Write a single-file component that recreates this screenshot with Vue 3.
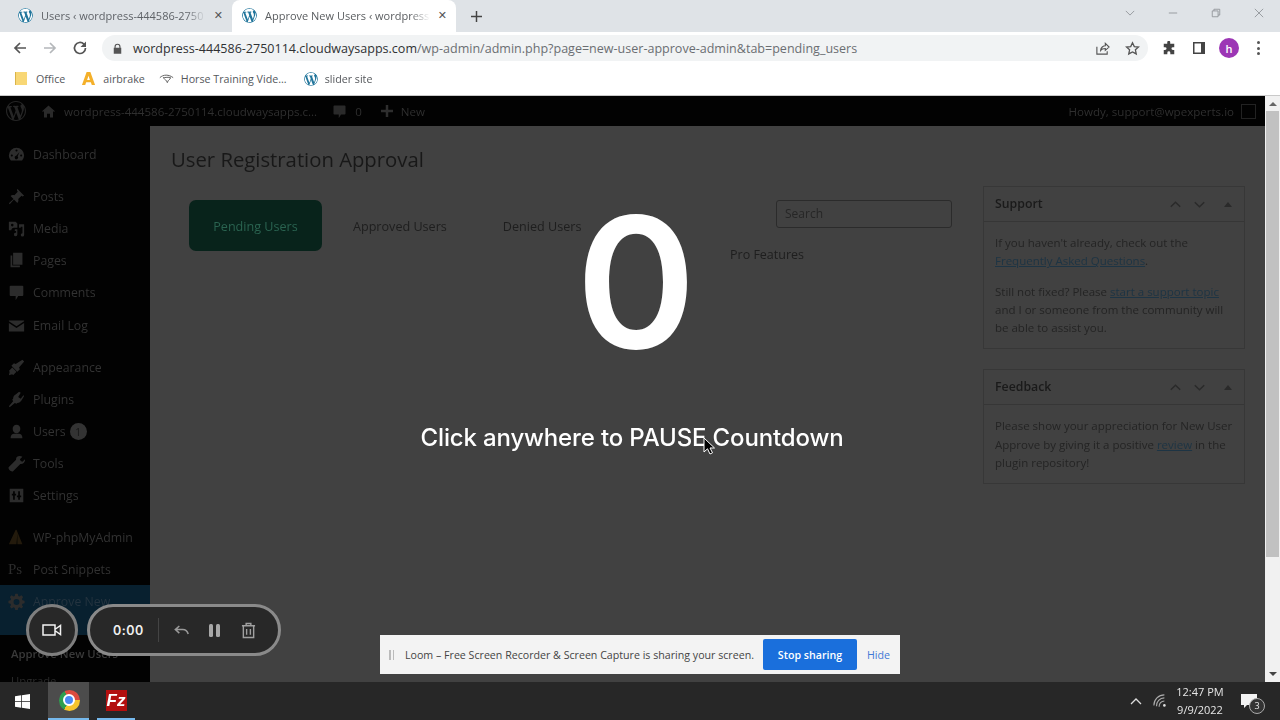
<script setup>
const wpPath = "M20 10c0-5.51-4.49-10-10-10C4.48 0 0 4.49 0 10c0 5.52 4.48 10 10 10 5.51 0 10-4.48 10-10zM7.78 15.37L4.37 6.22c.55-.02 1.17-.08 1.17-.08.5-.06.44-1.13-.06-1.11 0 0-1.45.11-2.37.11-.18 0-.37 0-.58-.01C4.12 2.69 6.87 1.11 10 1.11c2.33 0 4.45.87 6.05 2.34-.68-.11-1.65.39-1.65 1.58 0 .74.45 1.36.9 2.1.35.61.55 1.36.55 2.46 0 1.49-1.4 5-1.4 5l-3.03-8.37c.54-.02.82-.17.82-.17.5-.05.44-1.25-.06-1.22 0 0-1.44.12-2.38.12-.87 0-2.33-.12-2.33-.12-.5-.03-.56 1.2-.06 1.22l.92.08 1.26 3.41zM17.41 10c.24-.64.74-1.87.43-4.25.7 1.29 1.05 2.71 1.05 4.25 0 3.29-1.73 6.24-4.4 7.78.97-2.59 1.94-5.2 2.92-7.78zM6.1 18.09C3.12 16.65 1.11 13.53 1.11 10c0-1.3.23-2.48.72-3.59C3.25 10.3 4.67 14.2 6.1 18.09zm4.03-6.63l2.58 6.98c-.86.29-1.76.45-2.71.45-.79 0-1.57-.11-2.29-.33.81-2.38 1.62-4.74 2.42-7.1z";

const icons = {
  dashboard: "M10 2a9 9 0 0 0-9 9c0 2.4.9 4.5 2.4 6h13.2A9 9 0 0 0 19 11a9 9 0 0 0-9-9zm0 2a1.2 1.2 0 1 1 0 2.4A1.2 1.2 0 0 1 10 4zM4.5 10a1.2 1.2 0 1 1 0 2.4 1.2 1.2 0 0 1 0-2.4zm11 0a1.2 1.2 0 1 1 0 2.4 1.2 1.2 0 0 1 0-2.4zM13.5 7l-2.2 5.2a2 2 0 1 1-1.6-.6z",
  pin: "M11 1l8 8-2 1-1-1-4 4c.6 1.8.2 3.4-1 4.5L7 13.5 2 19l-1-1 5.5-5L3 9.5C4.1 8.3 5.7 7.900 7.500 8.500l4-4-1-1.500z",
  media: "M1 2h8l2 2v5H7a3 3 0 0 0-3 3H1zm4 2.500a1.500 1.500 0 1 0 0 3 1.500 1.500 0 0 0 0-3zM13 5h6v12.500a2 2 0 1 1-2-2V8h-2v1h-2zM8 11h3v6a2 2 0 1 1-1.500-1.900V13H8z",
  pages: "M6 1h11v14H6zM3 4h2v12h9v2H3z",
  comment: "M3 2h14a1 1 0 0 1 1 1v10a1 1 0 0 1-1 1h-5l-3 5v-5H3a1 1 0 0 1-1-1V3a1 1 0 0 1 1-1z",
  mail: "M1 4h18v1l-9 6-9-6zM1 7l9 6 9-6v10H1z",
  brush: "M19 3l-2-2-8 5-2-1-3 3 7 7 3-3-1-2zM5 10l-4 4 1 1-1 4 4-1 1 1 4-4z",
  plugin: "M13 1l2 1-3 5 3 2 3-4 1 1-3 5c-1 2-3 3-5 3l-1 1-2-1-6 5-1-1 5-6-1-2 1-1c0-2 1-4 3-5z",
  user: "M10 2a4.500 4.500 0 0 1 4.500 5c0 2.800-2 5-4.500 5S5.500 9.800 5.500 7A4.500 4.500 0 0 1 10 2zM3 18c0-4 2-5.500 4-5.500h6c2 0 4 1.500 4 5.500z",
  wrench: "M17 2l-3 3 1 2 2 1 3-3c.5 3-2 6-5.500 5.500L6 19c-1 1-3 0-4-1s-2-3-1-4l8.500-8.500C9 2 13 0 17 2z",
  settings: "M2 2h16v16H2zm4 3v3H4.500v2H6v5h2v-5h1.500V8H8V5zm6 0v5h-1.500v2H12v3h2v-3h1.500v-2H14V5z",
  sail: "M9 1h1l7 17h-6V5l-1 13H1z",
  gear: "M8.500 1h3l.5 2.500 1.500.6L15.700 2.700 17.800 4.800l-1.400 2.200.6 1.500 2.500.5v3l-2.500.5-.6 1.500 1.400 2.200-2.100 2.100-2.200-1.400-1.500.6-.5 2.500h-3l-.5-2.500-1.500-.6-2.200 1.400L2.200 16.300l1.400-2.200-.6-1.500L.5 12V9l2.500-.5.6-1.500-1.400-2.200L4.300 2.700l2.200 1.400 1.500-.6zM10 7a3.500 3.500 0 1 0 0 7 3.500 3.500 0 0 0 0-7z"
};

const menu = [
  { label: "Dashboard", icon: "dashboard", gap: true },
  { label: "Posts", icon: "pin" },
  { label: "Media", icon: "media" },
  { label: "Pages", icon: "pages" },
  { label: "Comments", icon: "comment" },
  { label: "Email Log", icon: "mail", gap: true },
  { label: "Appearance", icon: "brush" },
  { label: "Plugins", icon: "plugin" },
  { label: "Users", icon: "user", badge: 1 },
  { label: "Tools", icon: "wrench" },
  { label: "Settings", icon: "settings", gap: true, last: true },
  { label: "WP-phpMyAdmin", icon: "sail", sail: true },
  { label: "Post Snippets", ps: true },
  { label: "Approve New", icon: "gear", current: true }
];

const boxes = [
  { title: "Support", cls: "support" },
  { title: "Feedback", cls: "feedback" }
];
</script>

<template>
  <div class="screen">
    <div class="tabstrip">
      <div class="tab">
        <svg class="favicon" viewBox="0 0 20 20"><path :d="wpPath" /></svg>
        <span class="tab-title">Users ‹ wordpress-444586-2750</span>
        <span class="tab-x">✕</span>
      </div>
      <div class="tab active">
        <svg class="favicon" viewBox="0 0 20 20"><path :d="wpPath" /></svg>
        <span class="tab-title">Approve New Users ‹ wordpress-</span>
        <span class="tab-x">✕</span>
      </div>
      <svg class="newtab" viewBox="0 0 12 12"><path d="M6 0v12M0 6h12" /></svg>
      <div class="winctl">
        <svg viewBox="0 0 12 12" class="w-chev"><path d="M1 3.500l5 5 5-5" /></svg>
        <svg viewBox="0 0 12 12" class="w-min"><path d="M1 6h10" /></svg>
        <svg viewBox="0 0 12 12" class="w-res"><path d="M1.500 3.500h7v7h-7zM3.500 3.500v-2h7v7h-2" /></svg>
        <svg viewBox="0 0 12 12" class="w-close"><path d="M1 1l10 10M11 1L1 11" /></svg>
      </div>
    </div>

    <div class="toolbar">
      <svg class="nav" viewBox="0 0 16 16"><path d="M14 8H3M8 3L3 8l5 5" /></svg>
      <svg class="nav dim" viewBox="0 0 16 16"><path d="M2 8h11M8 3l5 5-5 5" /></svg>
      <svg class="nav" viewBox="0 0 16 16"><path d="M13.500 8a5.500 5.500 0 1 1-1.600-3.900L13.500 5.700" /><path class="fill" d="M14 1.500V7H8.500z" /></svg>
      <div class="omnibox">
        <svg class="lock" viewBox="0 0 12 14"><path d="M2 6V4.500a4 4 0 0 1 8 0V6h1v8H1V6zm1.500 0h5V4.500a2.500 2.500 0 0 0-5 0z" /></svg>
        <span class="url"><b>wordpress-444586-2750114.cloudwaysapps.com</b>/wp-admin/admin.php?page=new-user-approve-admin&amp;tab=pending_users</span>
        <svg class="omni-icon share" viewBox="0 0 16 16"><path d="M2 6v8h11v-3M6 10c0-3 3-5 5-5V2.500L15 6.500 11 10V8c-2 0-4 .5-5 2z" /></svg>
        <svg class="omni-icon star" viewBox="0 0 16 16"><path d="M8 1.800l1.900 4.100 4.500.5-3.300 3 .9 4.400L8 11.600l-4 2.200.9-4.400-3.300-3 4.500-.5z" /></svg>
      </div>
      <svg class="tool puzzle" viewBox="0 0 16 16"><path d="M6 1.500a1.700 1.700 0 0 1 3.400 0V3H14v4h-1.500a1.700 1.700 0 0 0 0 3.400H14V15H9.500v-1.500a1.700 1.700 0 0 0-3.400 0V15H2v-4.600h1.500a1.700 1.700 0 0 0 0-3.400H2V3h4z" /></svg>
      <svg class="tool panel" viewBox="0 0 14 14"><path fill-rule="evenodd" d="M1 1h12v12H1zm1.500 1.500v9H9v-9z" /></svg>
      <span class="avatar">h</span>
      <span class="kebab"><i></i><i></i><i></i></span>
    </div>

    <div class="bookmarks">
      <span class="bm"><span class="folder"></span>Office</span>
      <span class="bm">
        <svg class="bm-icon" viewBox="0 0 16 16"><path fill="#f4b02a" d="M6 1h4l5 14h-3.500l-1-3H5.500l-1 3H1zm2 4L6.500 9.500h3z" /></svg>airbrake
      </span>
      <span class="bm">
        <svg class="bm-icon" viewBox="0 0 18 12"><path fill="none" stroke="#666" stroke-width="1.200" d="M1 5c4-4 11-4 16 0M5 5c2 0 7-1 9 0-1 3-3 2-4 6-1-3-3-4-5-6z" /></svg>Horse Training Vide...
      </span>
      <span class="bm">
        <svg class="favicon" viewBox="0 0 20 20"><path :d="wpPath" /></svg>slider site
      </span>
    </div>

    <div class="page">
      <div class="wp">
        <div class="adminbar">
          <svg class="ab-logo" viewBox="0 0 20 20"><path :d="wpPath" /></svg>
          <svg class="ab-home" viewBox="0 0 20 20"><path d="M10 2l9 8h-3v8h-4v-5H8v5H4v-8H1z" /></svg>
          <span class="ab-site">wordpress-444586-2750114.cloudwaysapps.c...</span>
          <svg class="ab-comment" viewBox="0 0 20 20"><path :d="icons.comment" /></svg>
          <span class="ab-count">0</span>
          <svg class="ab-plus" viewBox="0 0 12 12"><path d="M6 0v12M0 6h12" /></svg>
          <span>New</span>
          <span class="ab-howdy">Howdy, support@wpexperts.io</span>
          <span class="ab-avatar"></span>
        </div>

        <div class="wp-body">
          <aside class="sidebar">
            <div
              v-for="item in menu"
              :key="item.label"
              class="menu-item"
              :class="{ gap: item.gap, last: item.last, current: item.current }"
            >
              <span v-if="item.ps" class="ps">Ps</span>
              <svg v-else class="menu-icon" :class="{ sail: item.sail }" viewBox="0 0 20 20"><path fill-rule="evenodd" :d="icons[item.icon]" /></svg>
              <span>{{ item.label }}</span>
              <span v-if="item.badge" class="badge">{{ item.badge }}</span>
            </div>
            <div class="submenu">Approve New Users</div>
            <div class="submenu plain">Upgrade</div>
          </aside>

          <main class="content">
            <div class="main-col">
              <h1>User Registration Approval</h1>
              <div class="tabs-row">
                <span class="nua-tab on">Pending Users</span>
                <span class="nua-tab">Approved Users</span>
                <span class="nua-tab">Denied Users</span>
                <span class="search">Search</span>
              </div>
              <div class="tabs-row2"><span class="nua-tab">Pro Features</span></div>
            </div>

            <div class="side-col">
              <section v-for="box in boxes" :key="box.title" class="box" :class="box.cls">
                <header>
                  <h2>{{ box.title }}</h2>
                  <svg viewBox="0 0 14 8"><path d="M1 7l6-6 6 6" /></svg>
                  <svg viewBox="0 0 14 8"><path d="M1 1l6 6 6-6" /></svg>
                  <span class="tri"></span>
                </header>
                <div v-if="box.title === 'Support'" class="box-body">
                  <p>If you haven't already, check out the <a>Frequently Asked Questions</a>.</p>
                  <p>Still not fixed? Please <a>start a support topic</a> and I or someone from the community will be able to assist you.</p>
                </div>
                <div v-else class="box-body">
                  <p>Please show your appreciation for New User Approve by giving it a positive <a>review</a> in the plugin repository!</p>
                </div>
              </section>
            </div>
          </main>
        </div>
      </div>
      <div class="scrollbar">
        <span class="arrow up"></span>
        <span class="thumb"></span>
        <span class="arrow down"></span>
      </div>
    </div>

    <div class="taskbar">
      <svg class="start" viewBox="0 0 16 16"><path d="M0 2.300l6.500-.9v6.200H0zM7.300 1.300L16 0v7.600H7.300zM0 8.400h6.500v6.200L0 13.700zM7.300 8.400H16V16l-8.700-1.300z" /></svg>
      <span class="task chrome-task"><span class="chrome"><i></i></span></span>
      <span class="task fz-task"><span class="fz">Fz</span></span>
      <div class="tray">
        <svg class="caret" viewBox="0 0 12 7"><path d="M1 6l5-5 5 5" /></svg>
        <svg class="wifi" viewBox="0 0 16 16"><path d="M1 13A12 12 0 0 1 13 1M4 14a9 9 0 0 1 9-9.500M7 14.500a6 6 0 0 1 6-6.500" /><circle cx="13" cy="13" r="1.500" /></svg>
        <div class="clock"><span>12:47 PM</span><span>9/9/2022</span></div>
        <span class="notify">
          <svg viewBox="0 0 16 16"><path d="M0 1h16v11H6l-3 3v-3H0z" /></svg>
          <span class="notify-n">3</span>
        </span>
      </div>
    </div>

    <div class="countdown">
      <div class="count-num">0</div>
      <div class="count-text">Click anywhere to PAUSE Countdown</div>
    </div>

    <div class="rec">
      <span class="rec-cam">
        <svg viewBox="0 0 20 14"><path d="M1 2h12v10H1zM13.500 6l5-3.500v9l-5-3.500" /></svg>
      </span>
      <div class="rec-pill">
        <span class="rec-time">0:00</span>
        <span class="rec-div"></span>
        <svg class="rec-undo" viewBox="0 0 18 12"><path d="M6 1L1.500 5 6 9M2 5h8c3 0 5 2 6 5" /></svg>
        <span class="rec-pause"><i></i><i></i></span>
        <svg class="rec-trash" viewBox="0 0 16 18"><path d="M1 4h14M5.500 4V1.500h5V4M2.500 4v12.500h11V4M6 7.500v6M10 7.500v6" /></svg>
      </div>
    </div>

    <div class="loom">
      <span class="grip"><i></i><i></i></span>
      <span class="loom-text">Loom – Free Screen Recorder &amp; Screen Capture is sharing your screen.</span>
      <span class="stop">Stop sharing</span>
      <span class="hide">Hide</span>
    </div>

    <svg class="cursor" viewBox="0 0 12 18"><path d="M1 1v14l3.500-3.200L7 17l2.500-1.200L7 11h4.500z" /></svg>
  </div>
</template>

<style>
html,
body {
  margin: 0;
  background: #222;
}
</style>

<style scoped>
.screen {
  position: relative;
  width: 1280px;
  height: 720px;
  overflow: hidden;
  display: flex;
  flex-direction: column;
  font-family: "Open Sans", "Noto Sans", sans-serif;
  color: #333;
  filter: blur(0.35px);
}
svg {
  flex: none;
  display: block;
}

/* browser chrome */
.tabstrip {
  height: 32px;
  background: #dfe3e7;
  display: flex;
  align-items: stretch;
  padding-left: 8px;
}
.tab {
  width: 224px;
  display: flex;
  align-items: center;
  box-sizing: border-box;
  padding: 0 9px 1px 10px;
  color: #5f6368;
  font-size: 11px;
}
.tab.active {
  background: #fff;
  border-radius: 8px 8px 0 0;
  color: #5a5d60;
}
.favicon {
  width: 15px;
  height: 15px;
  fill: #21759b;
  background: #fff;
  border-radius: 50%;
}
.tab-title {
  flex: 1;
  margin-left: 8px;
  white-space: nowrap;
  overflow: hidden;
  -webkit-mask-image: linear-gradient(90deg, #000 88%, transparent);
  mask-image: linear-gradient(90deg, #000 88%, transparent);
}
.tab-x {
  margin-left: 8px;
  font-size: 11px;
  font-weight: 700;
  color: #555;
  font-family: "DejaVu Sans", sans-serif;
}
.newtab {
  width: 11px;
  height: 11px;
  margin: 11px 0 0 15px;
  fill: none;
  stroke: #444;
  stroke-width: 1.600;
}
.winctl {
  margin-left: auto;
  display: flex;
  align-items: center;
  gap: 33px;
  padding: 0 16px 6px 0;
}
.winctl svg {
  width: 10px;
  height: 10px;
  fill: none;
  stroke: #8b8f94;
  stroke-width: 1;
}

.toolbar {
  height: 32px;
  background: #fff;
  display: flex;
  align-items: center;
  padding-left: 12px;
}
.nav {
  width: 16px;
  height: 16px;
  margin-right: 14px;
  fill: none;
  stroke: #555;
  stroke-width: 1.700;
}
.nav.dim {
  stroke: #b4b7ba;
}
.nav .fill {
  fill: #555;
  stroke: none;
}
.omnibox {
  width: 1046px;
  height: 26px;
  margin-left: 0;
  border-radius: 13px;
  background: #f1f3f4;
  display: flex;
  align-items: center;
  padding-left: 11px;
  box-sizing: border-box;
  font-size: 12.540px;
  color: #6b6e72;
}
.lock {
  width: 9px;
  height: 11px;
  fill: #555;
}
.url {
  margin-left: 11px;
  white-space: nowrap;
}
.url b {
  font-weight: 400;
  color: #2f3133;
}
.omni-icon {
  width: 15px;
  height: 15px;
  fill: none;
  stroke: #555;
  stroke-width: 1.200;
}
.share {
  margin-left: auto;
}
.star {
  margin: 0 8px 0 15px;
  stroke-width: 1.400;
}
.tool {
  width: 14px;
  height: 14px;
  fill: #444;
}
.puzzle {
  margin-left: 14px;
}
.panel {
  margin-left: 16px;
}
.avatar {
  width: 20px;
  height: 20px;
  margin-left: 13px;
  border-radius: 50%;
  background: #9c36b5;
  color: #fff;
  font-size: 11px;
  font-weight: 600;
  display: flex;
  align-items: center;
  justify-content: center;
}
.kebab {
  margin-left: 18px;
  display: flex;
  flex-direction: column;
  gap: 2.500px;
}
.kebab i {
  width: 3px;
  height: 3px;
  border-radius: 50%;
  background: #555;
}

.bookmarks {
  height: 29px;
  padding: 0 0 2px 15px;
  background: #fff;
  border-bottom: 1px solid #c9c9c9;
  box-sizing: content-box;
  display: flex;
  align-items: center;
  gap: 16px;
  font-size: 10.700px;
  color: #55585c;
}
.bm {
  display: flex;
  align-items: center;
  gap: 7px;
  white-space: nowrap;
}
.bm:nth-child(3) {
  margin-left: -2px;
}
.bm:nth-child(4) {
  margin-left: 1px;
}
.bm .favicon {
  width: 14px;
  height: 14px;
}
.folder {
  width: 11px;
  height: 13px;
  margin-right: 2px;
  background: #f8d775;
  border-left: 1px solid #d9b44a;
}
.bm-icon {
  width: 15px;
  height: 15px;
}

/* dimmed wordpress page */
.page {
  flex: 1;
  min-height: 0;
  display: flex;
}
.wp {
  width: 1265px;
  display: flex;
  flex-direction: column;
  background: #414141;
}
.adminbar {
  height: 30px;
  flex: none;
  background: #020202;
  display: flex;
  align-items: center;
  padding: 0 9px 0 6px;
  font-size: 11.550px;
  color: #2f2f2f;
  white-space: nowrap;
}
.ab-logo {
  width: 20px;
  height: 20px;
  fill: #262626;
}
.ab-home {
  width: 15px;
  height: 15px;
  margin-left: 15px;
  fill: #2a2a2a;
}
.ab-site {
  margin-left: 8px;
}
.ab-comment {
  width: 15px;
  height: 15px;
  margin-left: 15px;
  fill: #2a2a2a;
}
.ab-count {
  margin: 0 19px 0 8px;
}
.ab-plus {
  width: 12px;
  height: 12px;
  margin-right: 8px;
  fill: none;
  stroke: #2e2e2e;
  stroke-width: 2.500;
}
.ab-howdy {
  margin-left: auto;
}
.ab-avatar {
  width: 15px;
  height: 15px;
  margin-left: 7px;
  border: 1px solid #222;
  box-sizing: border-box;
}

.wp-body {
  flex: 1;
  min-height: 0;
  display: flex;
  overflow: hidden;
}
.sidebar {
  width: 150px;
  flex: none;
  background: #020202;
  padding-top: 12px;
  font-size: 12.300px;
  color: #323232;
}
.menu-item {
  height: 32.200px;
  display: flex;
  align-items: center;
  padding-left: 8px;
  white-space: nowrap;
}
.menu-item.gap {
  margin-bottom: 10px;
}
.menu-item.last {
  margin-bottom: 9px;
}
.menu-icon {
  width: 17px;
  height: 17px;
  margin-right: 8px;
  fill: #2c2c2c;
}
.menu-icon.sail {
  fill: #231a0c;
}
.ps {
  width: 17px;
  margin-right: 8px;
  font-family: "Liberation Serif", serif;
  font-size: 15px;
  color: #2c2c2c;
}
.badge {
  width: 17px;
  height: 17px;
  margin-left: 4px;
  border-radius: 50%;
  background: #333;
  color: #151515;
  font-size: 10px;
  display: flex;
  align-items: center;
  justify-content: center;
}
.menu-item.current {
  height: 50px;
  padding-bottom: 18px;
  box-sizing: border-box;
  background: #08202f;
  color: #24333f;
}
.submenu {
  margin-top: 11px;
  padding-left: 11px;
  font-size: 11.300px;
  font-weight: 600;
  color: #3a3a3a;
}
.submenu.plain {
  margin-top: 12px;
  font-weight: 400;
  color: #2a2a2a;
}

.content {
  flex: 1;
  display: flex;
  justify-content: space-between;
  padding: 0 20px 0 21px;
}
.main-col {
  width: 781px;
}
h1 {
  margin: 20px 0 0;
  font-size: 20.300px;
  font-weight: 400;
  line-height: 27px;
  color: #181818;
  white-space: nowrap;
}
.tabs-row {
  margin-top: 27px;
  padding-left: 18px;
  display: flex;
  align-items: flex-start;
  font-size: 12.600px;
  color: #1e1e1e;
}
.nua-tab {
  padding-top: 18px;
  height: 33px;
  white-space: nowrap;
}
.nua-tab.on {
  width: 133px;
  box-sizing: border-box;
  height: 51px;
  background: #08231b;
  border-radius: 7px;
  text-align: center;
  color: #2a6350;
  margin-right: 31px;
}
.nua-tab:nth-child(2) {
  margin-right: 56px;
}
.search {
  margin-left: auto;
  width: 176px;
  height: 28px;
  box-sizing: border-box;
  border: 1px solid #2b2b2b;
  border-radius: 3px;
  padding-left: 8px;
  line-height: 25px;
  font-size: 12px;
  color: #262626;
}
.tabs-row2 {
  margin-top: -23px;
  padding-left: 559px;
  font-size: 12.500px;
  color: #1e1e1e;
}
.tabs-row2 .nua-tab {
  display: block;
}

.side-col {
  width: 262px;
  padding-top: 60px;
}
.box {
  border: 1px solid #373737;
  margin-bottom: 20px;
  font-size: 11.500px;
  line-height: 18.300px;
  color: #242424;
}
.box header {
  height: 34px;
  border-bottom: 1px solid #363636;
  display: flex;
  align-items: center;
  padding: 0 12px 0 11px;
}
h2 {
  margin: 0 auto 0 0;
  font-size: 12.300px;
  font-weight: 600;
  color: #1a1a1a;
}
.box header svg {
  width: 11px;
  height: 7px;
  margin-left: 13px;
  fill: none;
  stroke: #2a2a2a;
  stroke-width: 1.800;
}
.tri {
  margin-left: 19px;
  width: 0;
  height: 0;
  border-left: 4px solid transparent;
  border-right: 4px solid transparent;
  border-bottom: 5px solid #2a2a2a;
}
.box-body {
  padding: 12px 5px 11px 11px;
}
.box-body p {
  margin: 0 0 12px;
}
.box-body p:last-child {
  margin-bottom: 0;
}
.box-body a {
  color: #1d3444;
  text-decoration: underline;
}

.scrollbar {
  width: 15px;
  flex: none;
  background: #f1f1f1;
  display: flex;
  flex-direction: column;
  align-items: center;
  padding: 6px 0;
  box-sizing: border-box;
}
.thumb {
  width: 13px;
  height: 446px;
  margin-top: 5px;
  background: #c1c1c1;
}
.arrow {
  width: 0;
  height: 0;
  border-left: 4px solid transparent;
  border-right: 4px solid transparent;
}
.arrow.up {
  border-bottom: 4px solid #666;
}
.arrow.down {
  margin-top: auto;
  border-top: 4px solid #444;
}

/* windows taskbar */
.taskbar {
  height: 38px;
  flex: none;
  background: #272727;
  display: flex;
  align-items: stretch;
  padding-left: 15px;
}
.start {
  width: 15px;
  height: 15px;
  margin-top: 12px;
  fill: #fff;
}
.task {
  width: 41px;
  box-sizing: border-box;
  border-bottom: 2px solid #76b9ed;
  display: flex;
  align-items: center;
  justify-content: center;
}
.chrome-task {
  margin-left: 18px;
  background: #4c4c4c;
  margin-right: 8px;
}
.fz-task {
  width: 38px;
}
.chrome {
  width: 21px;
  height: 21px;
  margin-left: 1px;
  border-radius: 50%;
  background: conic-gradient(from -28deg, #dd4b3e 0 118deg, #f6c52c 118deg 238deg, #2e9e4f 238deg 360deg);
  display: flex;
  align-items: center;
  justify-content: center;
}
.chrome i {
  width: 8px;
  height: 8px;
  border-radius: 50%;
  background: #4a8af4;
  border: 2px solid #fff;
}
.fz {
  width: 21px;
  height: 21px;
  background: #b30f0f;
  color: #fff;
  font-family: "Liberation Sans", sans-serif;
  font-weight: 700;
  font-style: italic;
  font-size: 17px;
  line-height: 21px;
  text-align: center;
}
.tray {
  margin-left: auto;
  display: flex;
  align-items: center;
  color: #e6e6e6;
}
.caret {
  width: 12px;
  height: 7px;
  fill: none;
  stroke: #ddd;
  stroke-width: 1.300;
}
.wifi {
  width: 14px;
  height: 14px;
  margin-left: 11px;
  fill: none;
  stroke: #aaa;
  stroke-width: 1.300;
}
.wifi circle {
  fill: #ddd;
  stroke: none;
}
.clock {
  width: 60px;
  margin-left: 3px;
  display: flex;
  flex-direction: column;
  align-items: center;
  gap: 2px;
  font-size: 11px;
  line-height: 16px;
}
.notify {
  position: relative;
  width: 16px;
  height: 16px;
  margin: 0 23px 0 11px;
}
.notify svg {
  width: 16px;
  height: 16px;
  fill: #f2f2f2;
}
.notify-n {
  position: absolute;
  left: 8px;
  top: 5px;
  width: 14px;
  height: 14px;
  border-radius: 50%;
  border: 1px solid #aaa;
  background: #333;
  font-size: 9px;
  line-height: 14px;
  text-align: center;
}

/* things lying over the page */
.countdown {
  position: absolute;
  left: 380px;
  top: 0;
  width: 504px;
  color: #fff;
  font-family: Inter, "Open Sans", sans-serif;
  text-align: center;
}
.count-num {
  margin-top: 167px;
  margin-left: 8px;
  font-size: 182px;
  font-weight: 600;
  line-height: 230px;
}
.count-text {
  margin-top: 26px;
  font-size: 24px;
  font-weight: 500;
  line-height: 30px;
  letter-spacing: -0.150px;
}
.rec {
  position: absolute;
  left: 26px;
  top: 604px;
  display: flex;
  align-items: center;
  gap: 9px;
}
.rec-cam {
  width: 46px;
  height: 46px;
  border-radius: 50%;
  background: #282828;
  border: 3px solid #7f7f7f;
  display: flex;
  align-items: center;
  justify-content: center;
}
.rec-cam svg {
  width: 20px;
  height: 14px;
  fill: none;
  stroke: #f2f2f2;
  stroke-width: 1.500;
}
.rec-pill {
  width: 165px;
  height: 46px;
  border-radius: 26px;
  background: #282828;
  border: 3px solid #8a8a8a;
  display: flex;
  align-items: center;
  padding-left: 23px;
}
.rec-time {
  font-family: Inter, sans-serif;
  font-size: 12.500px;
  font-weight: 600;
  letter-spacing: 0.500px;
  color: #f0f0f0;
}
.rec-div {
  width: 1px;
  height: 24px;
  margin-left: 14px;
  background: #444;
}
.rec-undo {
  width: 16px;
  height: 11px;
  margin-left: 15px;
  fill: none;
  stroke: #9a9a9a;
  stroke-width: 1.700;
}
.rec-pause {
  margin-left: 19px;
  display: flex;
  gap: 3px;
}
.rec-pause i {
  width: 4px;
  height: 13px;
  border-radius: 1.500px;
  background: #a8a8a8;
}
.rec-trash {
  width: 15px;
  height: 17px;
  margin-left: 21px;
  fill: none;
  stroke: #a0a0a0;
  stroke-width: 1.500;
}
.loom {
  position: absolute;
  left: 380px;
  top: 635px;
  width: 520px;
  height: 39px;
  box-sizing: border-box;
  background: #f3f3f3;
  display: flex;
  align-items: center;
  padding-left: 9px;
  font-size: 10.650px;
  color: #444;
  white-space: nowrap;
}
.grip {
  display: flex;
  gap: 2px;
}
.grip i {
  width: 1.500px;
  height: 10px;
  background: #bbb;
}
.loom-text {
  margin-left: 11px;
}
.stop {
  margin-left: auto;
  width: 94px;
  height: 31px;
  border-radius: 2px;
  background: #1a6fdc;
  color: #fff;
  font-weight: 600;
  display: flex;
  align-items: center;
  justify-content: center;
}
.hide {
  margin: 0 10px 0 10px;
  color: #3f78d6;
}
.cursor {
  position: absolute;
  left: 703px;
  top: 437px;
  width: 12px;
  height: 18px;
  fill: #000;
  stroke: #fff;
  stroke-width: 1;
}
</style>
